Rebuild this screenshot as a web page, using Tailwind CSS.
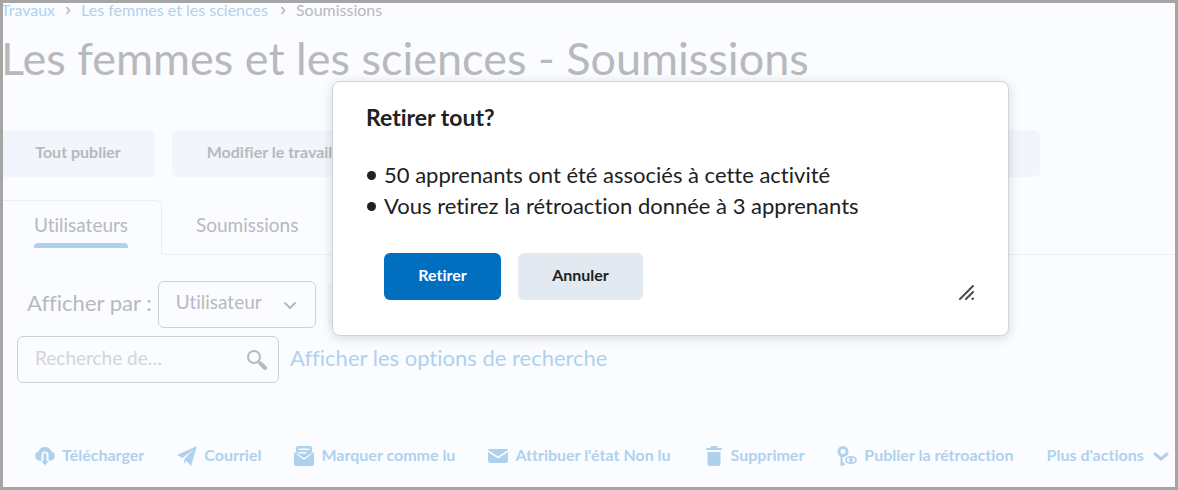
<!DOCTYPE html>
<html lang="fr">
<head>
    <meta charset="UTF-8">
    <meta name="viewport" content="width=device-width, initial-scale=1.0">
    <title>Les femmes et les sciences - Soumissions</title>
    <script src="https://cdn.jsdelivr.net/npm/@tailwindcss/browser@4"></script>
</head>
<body class="relative min-h-screen overflow-x-hidden border-3 border-[#a5a5a5] bg-[#fbfcff] font-['Lato',sans-serif] text-[#b7b9bc] [font-variant-ligatures:none]">
    <main>
        <div class="-mt-px -ml-[2px]">
            <nav aria-label="Fil d'Ariane" class="flex h-4 items-center gap-[9px] whitespace-nowrap text-base leading-4">
                <a href="#" class="text-[#aed2ee]">Travaux</a>
                <svg class="h-2 w-2" viewBox="0 0 8 8" fill="none" stroke="currentColor" stroke-width="1.6" aria-hidden="true"><path d="M2.5 1l3 3.5-3 3.5"/></svg>
                <a href="#" class="text-[#aed2ee]">Les femmes et les sciences</a>
                <svg class="ml-[2px] h-2 w-2" viewBox="0 0 8 8" fill="none" stroke="currentColor" stroke-width="1.6" aria-hidden="true"><path d="M2.5 1l3 3.5-3 3.5"/></svg>
                <span>Soumissions</span>
            </nav>
            <h1 class="mt-3 whitespace-nowrap text-[45px] leading-[56px]">Les femmes et les sciences - Soumissions</h1>

            <div class="mt-11 flex gap-[17px] text-base font-bold">
                <button type="button" class="h-[47px] w-[154px] rounded-r-md bg-[#f2f5fc] pb-[3px]">Tout publier</button>
                <button type="button" class="h-[47px] w-[195px] rounded-md bg-[#f2f5fc] pb-[3px]">Modifier le travail</button>
                <button type="button" aria-label="Autres actions" class="h-[47px] w-[656px] rounded-md bg-[#f2f5fc]"></button>
            </div>

            <div role="tablist" class="mt-[23px] flex h-[55px] text-[19px] leading-7">
                <button type="button" role="tab" aria-selected="true" class="flex w-[161px] flex-col items-center rounded-tr-md border-t border-r border-[#edeef4] pt-[10px]">
                    <span>Utilisateurs<span class="mt-1 block h-[5px] rounded-t bg-[#aed2ee]"></span></span>
                </button>
                <button type="button" role="tab" aria-selected="false" class="flex flex-1 rounded-bl border-b border-[#edeef4] pt-[11px] pl-[34px]">Soumissions</button>
            </div>
        </div>

        <div class="mt-[26px] ml-6 flex items-center">
            <label for="view" class="mr-[6px] pb-1 text-[22px] leading-7">Afficher par :</label>
            <div class="relative">
                <select id="view" class="block h-[47px] w-[158px] appearance-none rounded-md border border-[#cdd1d7] pb-1 pl-[17px] text-[19px]">
                    <option>Utilisateur</option>
                </select>
                <svg class="pointer-events-none absolute top-[18px] right-5 h-3 w-3" viewBox="0 0 12 12" fill="none" stroke="currentColor" stroke-width="2" stroke-linecap="round" stroke-linejoin="round" aria-hidden="true"><path d="M1 4l5 5 5-5"/></svg>
            </div>
            <button type="button" aria-label="Appliquer" class="ml-3 h-[47px] w-24 rounded-md bg-[#f2f5fc]"></button>
        </div>

        <div class="mt-2 ml-[14px] flex items-center gap-[11px]">
            <div class="relative">
                <input type="text" aria-label="Recherche de" placeholder="Recherche de…" class="block h-[47px] w-[262px] rounded-md border border-[#cdd1d7] pb-1 pl-[17px] text-[19px] placeholder:text-[#d2d4d9]">
                <svg class="pointer-events-none absolute top-[14px] right-3 h-5 w-5" viewBox="0 0 20 20" fill="none" stroke="currentColor" aria-hidden="true"><circle cx="7" cy="7" r="6" stroke-width="2"/><path d="M11 11l2 2" stroke-width="2"/><path d="M13.5 13.5l4.5 4.5" stroke-width="4" stroke-linecap="round"/></svg>
            </div>
            <a href="#" class="pb-1 text-[22px] leading-7 text-[#aed2ee]">Afficher les options de recherche</a>
        </div>

        <div class="mt-[60px] ml-8 flex items-center gap-[33px] pb-5 text-base leading-5 font-bold whitespace-nowrap text-[#aed2ee]">
            <button type="button" class="flex items-center gap-[7px]">
                <svg class="mt-[3px] h-5 w-5" viewBox="0 0 20 20" fill="currentColor" aria-hidden="true"><path d="M6.5 14.5H4.5A4.6 4.6 0 0 1 3.5 5.5A7 7 0 0 1 16.5 5.5A4.6 4.6 0 0 1 15.5 14.5H13.5V8.5Q13.5 5.5 10 5.5T6.5 8.5z"/><path d="M8.5 8.500Q8.500 7 10 7t1.500 1.500V15H13.500L10 19.500 6.500 15H8.500z"/></svg>
                Télécharger
            </button>
            <button type="button" class="flex items-center gap-[7px]">
                <svg class="mt-[3px] h-5 w-5" viewBox="0 0 20 20" fill="currentColor" aria-hidden="true"><path d="M20 0L0 9l5.5 3L17 3 7.500 13l-.5 5 2.500-3 4.500 5z"/></svg>
                Courriel
            </button>
            <button type="button" class="flex items-center gap-[7px]">
                <svg class="mt-[3px] h-5 w-5" viewBox="0 0 20 20" fill="currentColor" aria-hidden="true"><path fill-rule="evenodd" d="M4 0h12a2 2 0 0 1 2 2v5l-8 5-8-5V2a2 2 0 0 1 2-2zM4.500 2.500V4h11V2.500zM4.500 6v1.500h8V6z"/><path d="M0 6l10 8 10-8v12a2 2 0 0 1-2 2H2a2 2 0 0 1-2-2z"/></svg>
                Marquer comme lu
            </button>
            <button type="button" class="flex items-center gap-[7px]">
                <svg class="mt-[3px] h-5 w-5" viewBox="0 0 20 20" fill="currentColor" aria-hidden="true"><path d="M1 3h18a1 1 0 0 1 1 1L10 10.500 0 4a1 1 0 0 1 1-1z"/><path d="M0 6l10 6.500L20 6v9a2 2 0 0 1-2 2H2a2 2 0 0 1-2-2z"/></svg>
                Attribuer l'état Non lu
            </button>
            <button type="button" class="flex items-center gap-[7px]">
                <svg class="mt-[3px] h-5 w-5" viewBox="0 0 20 20" fill="currentColor" aria-hidden="true"><path d="M6.500 1a1 1 0 0 1 1-1h5a1 1 0 0 1 1 1v1H17a1 1 0 0 1 1 1v1H2V3a1 1 0 0 1 1-1h3.500z"/><path d="M3.500 6h13v12a2 2 0 0 1-2 2h-9a2 2 0 0 1-2-2z"/></svg>
                Supprimer
            </button>
            <button type="button" class="flex items-center gap-[7px]">
                <svg class="mt-[3px] h-5 w-5" viewBox="0 0 20 20" fill="none" stroke="currentColor" aria-hidden="true"><circle cx="6" cy="5.500" r="4" stroke-width="3"/><path d="M4.500 10v9l1.500-1.500 1.500 1.500" stroke-width="2"/><ellipse cx="14" cy="14" rx="5" ry="3.200" stroke-width="1.800"/><circle cx="14" cy="14" r="2" fill="currentColor" stroke="none"/></svg>
                Publier la rétroaction
            </button>
            <button type="button" class="flex items-center gap-[9px]">
                Plus d'actions
                <svg class="mt-[3px] h-4 w-4" viewBox="0 0 16 16" fill="none" stroke="currentColor" stroke-width="3" stroke-linecap="round" stroke-linejoin="round" aria-hidden="true"><path d="M2 6l6 5 6-5"/></svg>
            </button>
        </div>
    </main>

    <div role="dialog" aria-modal="true" aria-labelledby="dialog-title" class="absolute top-[78px] left-[329px] w-[677px] rounded-lg border border-[#cdd5dc] bg-white px-[33px] pt-[19px] pb-[35px] text-[#202122] shadow-[0_2px_12px_rgba(0,0,0,0.15)]">
        <h2 id="dialog-title" class="text-[23px] leading-8 font-bold">Retirer tout?</h2>
        <ul class="mt-[26px] pl-px text-[22px] leading-[31px]">
            <li class="flex items-center gap-2"><span class="mt-[2px] h-[9px] w-[9px] rounded-full bg-current"></span>50 apprenants ont été associés à cette activité</li>
            <li class="flex items-center gap-2"><span class="mt-[2px] h-[9px] w-[9px] rounded-full bg-current"></span>Vous retirez la rétroaction donnée à 3 apprenants</li>
        </ul>
        <div class="mt-8 flex items-center gap-[17px] pl-[18px] text-base font-bold">
            <button type="button" class="h-[47px] w-[117px] rounded-md bg-[#006fbf] pb-[3px] text-white">Retirer</button>
            <button type="button" class="h-[47px] w-[125px] rounded-md bg-[#e3e9f1] pb-[3px]">Annuler</button>
            <svg class="ml-auto h-4 w-4 self-end" viewBox="0 0 16 16" fill="none" stroke="#494c4e" stroke-width="2" stroke-linecap="round" aria-hidden="true"><path d="M1 15L14 2M7 15l7-7M13.500 15l.5-.5"/></svg>
        </div>
    </div>
</body>
</html>
